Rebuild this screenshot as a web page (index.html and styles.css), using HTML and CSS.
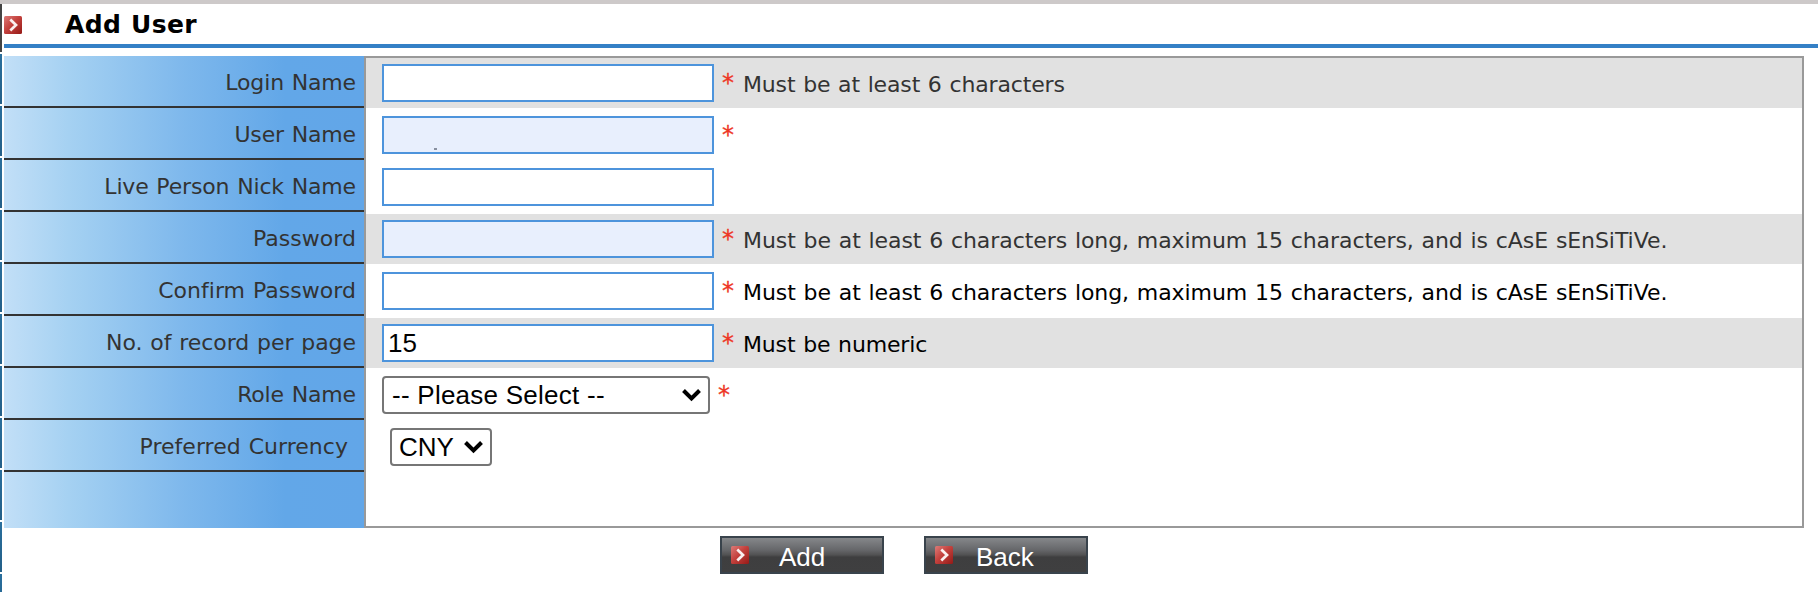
FILE: index.html
```html
<!DOCTYPE html>
<html lang="en">
<head>
<meta charset="utf-8">
<title>Add User</title>
<link rel="stylesheet" href="styles.css">
</head>
<body>
<svg class="defs" width="0" height="0">
  <defs>
    <linearGradient id="red" x1="0" y1="0" x2="1" y2="1">
      <stop offset="0" stop-color="#dc7b78"/><stop offset=".45" stop-color="#c4423e"/><stop offset="1" stop-color="#951a17"/>
    </linearGradient>
    <symbol id="arrow" viewBox="0 0 18 18">
      <rect width="18" height="18" rx="1.5" fill="url(#red)"/>
      <path d="M6.3 3.6L12 9l-5.700 5.400" fill="none" stroke="#fff" stroke-opacity=".92" stroke-width="2.7"/>
    </symbol>
  </defs>
</svg>
<div class="topbar"></div>
<div class="page">
  <div class="rail"><i class="dark"></i><i></i><i></i><i></i><i></i><i></i><i></i><i></i><i></i><i></i><i></i><i></i></div>
  <main class="main">
    <header class="header">
      <svg class="icon"><use href="#arrow"/></svg>
      <h1>Add User</h1>
    </header>
    <form class="form">
      <div class="labels">
        <label>Login Name</label>
        <label>User Name</label>
        <label>Live Person Nick Name</label>
        <label class="wide">Password</label>
        <label class="wide">Confirm Password</label>
        <label class="mid">No. of record per page</label>
        <label>Role Name</label>
        <label class="wide inset">Preferred Currency</label>
        <label class="last"></label>
      </div>
      <div class="fields">
        <div class="row gray"><span class="input"></span><b>*</b><span class="hint">Must be at least 6 characters</span></div>
        <div class="row"><span class="input filled"><i class="speck"></i></span><b>*</b></div>
        <div class="row"><span class="input"></span></div>
        <div class="row gray"><span class="input filled"></span><b>*</b><span class="hint long">Must be at least 6 characters long, maximum 15 characters, and is cAsE sEnSiTiVe.</span></div>
        <div class="row"><span class="input"></span><b>*</b><span class="hint long black">Must be at least 6 characters long, maximum 15 characters, and is cAsE sEnSiTiVe.</span></div>
        <div class="row gray"><span class="input">15</span><b>*</b><span class="hint black">Must be numeric</span></div>
        <div class="row"><span class="select role">-- Please Select --<svg class="chev" viewBox="0 0 20 14"><path d="M1.500 2.500l8 8 8-8" /></svg></span><b>*</b></div>
        <div class="row"><span class="select currency">CNY<svg class="chev" viewBox="0 0 20 14"><path d="M1.500 2.500l8 8 8-8" /></svg></span></div>
      </div>
    </form>
    <div class="actions">
      <button class="btn add"><svg class="icon"><use href="#arrow"/></svg><span>Add</span></button>
      <button class="btn back"><svg class="icon"><use href="#arrow"/></svg><span>Back</span></button>
    </div>
  </main>
</div>
</body>
</html>
```
FILE: styles.css
```css
* { box-sizing: border-box; }
body { margin: 0; height: 592px; overflow: hidden; background: #fff; font: 22px/26px Verdana, "DejaVu Sans", sans-serif; color: #333; letter-spacing: -0.15px; word-spacing: 0.9px; font-variant-ligatures: none; }
.defs { display: block; }
.topbar { height: 4px; background: #cdc9c9; }
.page { display: flex; height: 588px; overflow: hidden; }
.rail { width: 4px; flex: none; display: flex; flex-direction: column; gap: 2px; }
.rail i { width: 2px; height: 50px; flex: none; background: linear-gradient(#2a6f9d, #235f88); }
.rail .dark { height: 48px; background: #444; }
.main { flex: 1; min-width: 0; }
.header { height: 44px; display: flex; align-items: flex-start; border-bottom: 4px solid #3480c6; }
.header .icon { margin-top: 12px; }
.icon { width: 18px; height: 18px; flex: none; }
h1 { margin: 6px 0 0 43px; font-size: 25px; line-height: 30px; font-weight: bold; color: #000; letter-spacing: 0.4px; word-spacing: 0.5px; }
.form { display: flex; margin-top: 8px; width: 1800px; height: 472px; }
.labels { width: 360px; flex: none; display: flex; flex-direction: column; background: linear-gradient(90deg, #c2dff7 0, #a5d1f2 18%, #7eb8ec 50%, #62a7e8 78%, #62a6e8 100%); }
label { height: 52px; padding: 14px 8px 0 0; text-align: right; border-bottom: 2px solid #333; }
label.wide { letter-spacing: 0.03px; }
label.mid { letter-spacing: -0.05px; }
label.inset { padding-right: 16px; }
label.last { height: 56px; border: 0; }
.fields { flex: 1; border: 2px solid #999; display: flex; flex-direction: column; gap: 2px; }
.row { height: 50px; padding: 6px 16px; display: flex; }
.gray { background: #e1e1e1; }
.input { width: 332px; height: 38px; flex: none; border: 2px solid #4d94dc; background: #fff; padding: 2px 4px; font: 26px/30px "Liberation Sans", Arial, sans-serif; color: #000; letter-spacing: 0; }
.filled { background: #e8effd; }
.speck { display: block; width: 3px; height: 2px; margin: 28px 0 0 46px; background: #8890a0; }
.row b { font-size: 24px; font-weight: normal; color: #ee3524; width: 29px; padding: 6px 0 0 8px; flex: none; -webkit-text-stroke: 0.3px #ee3524; }
.hint { padding-top: 8px; white-space: nowrap; }
.long { letter-spacing: -0.07px; }
.black { color: #000; }
.select { height: 38px; border: 2px solid #767676; border-radius: 4px; background: #fff; color: #000; display: flex; justify-content: space-between; align-items: center; font: 26px/30px "Liberation Sans", Arial, sans-serif; letter-spacing: 0; word-spacing: 0; padding: 0 6px 0 8px; }
.role { width: 328px; letter-spacing: 0.25px; }
.currency { width: 102px; margin-left: 8px; padding-left: 7px; }
.chev { width: 20px; height: 14px; }
.chev path { fill: none; stroke: #000; stroke-width: 4; }
.actions { display: flex; gap: 40px; padding: 8px 0 0 716px; }
.btn { width: 164px; height: 38px; border: 2px solid #39434c; padding: 0; display: flex; align-items: flex-start; background: linear-gradient(#85878a, #66676a 35%, #515152 50%, #3e3e3f 56%, #3f3f40); color: #fff; font: 26px/30px "Liberation Sans", Arial, sans-serif; }
.btn .icon { margin: 8px 0 0 9px; }
.btn span { margin: 4px 0 0 30px; }
.btn.back span { margin-left: 23px; }
```
